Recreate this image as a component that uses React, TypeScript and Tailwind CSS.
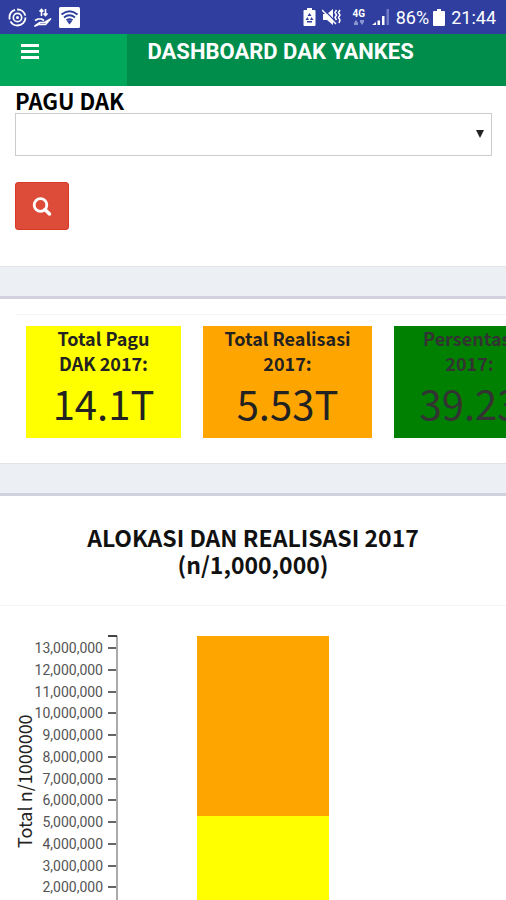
import React from "react";

const SANS = "font-['Noto_Sans_CJK_JP','Noto_Sans',sans-serif]";

function StatusBar() {
  return (
    <div className="flex h-[34px] shrink-0 items-center justify-between bg-[#303f9f] pr-2.5 pl-2 font-['Roboto',sans-serif] text-white">
      <div className="flex items-center gap-[7px]">
        <svg width="19" height="19" viewBox="0 0 19 19" fill="none" stroke="currentColor">
          <circle cx="9.5" cy="9.5" r="8" strokeWidth="1.8" strokeDasharray="21 2 12 2 11 2" />
          <circle cx="9.5" cy="9.5" r="4.2" strokeWidth="1.7" />
          <circle cx="9.5" cy="9.5" r="1.5" fill="currentColor" stroke="none" />
        </svg>
        <svg width="18" height="19" viewBox="0 0 18 19" fill="none" stroke="currentColor">
          <path d="M7.500 8V1.500M5.500 3.500l2-2 2 2M11.500 1v6.500M9.500 5.500l2 2 2-2" strokeWidth="1.600" />
          <path d="M1 12.500l3-1.500h3.500l2.500 1.500M6 14.500h4.500l6-3.500-5 5.500H4.500L1 18z" strokeWidth="1.700" strokeLinejoin="round" />
        </svg>
        <svg width="21" height="21" viewBox="0 0 21 21">
          <rect width="21" height="21" rx="1.500" fill="#fff" />
          <path d="M2.500 7.600Q10.500 1 18.500 7.600M5 10.500Q10.500 6 16 10.500M7.500 13.300Q10.500 11 13.500 13.300" fill="none" stroke="#303f9f" strokeWidth="1.900" />
          <path d="M8 14.200Q10.500 12.500 13 14.200L10.500 17.500z" fill="#303f9f" />
        </svg>
      </div>
      <div className="flex items-center text-[18px]">
        <svg width="13" height="18" viewBox="0 0 13 18" className="mr-1.5">
          <path d="M4 0h5v2h2.500q1 0 1 1v14q0 1-1 1h-10q-1 0-1-1V3q0-1 1-1H4z" fill="#fff" />
          <path d="M6.500 5l2 3h-4zM2.500 12l2-3 1.500 3zM10.500 12l-2-3-1.500 3zM4 13h5v1.500H4z" fill="#303f9f" />
        </svg>
        <svg width="20" height="18" viewBox="0 0 20 18" className="mr-2.5" fill="none" stroke="#fff">
          <path d="M1 6h4l6-5v16l-6-5H1z" fill="#fff" stroke="none" />
          <path d="M1 1l15 15" stroke="#303f9f" strokeWidth="1.200" />
          <path d="M0 2l14 14" strokeWidth="1.500" />
          <path d="M14.500 2l-1.500 2.500 1.500 2.500-1.500 2.500 1.500 2.500M18 2l-1.500 2.500L18 7l-1.500 2.500L18 12l-1 3" strokeWidth="1.500" />
        </svg>
        <div className="mr-1.5 flex w-[14px] flex-col items-center">
          <span className="text-[10px] leading-[10px] font-bold">4G</span>
          <svg width="10" height="5" viewBox="0 0 10 5" fill="#8c96d0" className="mt-px">
            <path d="M0 3l2-3 2 3v2H0zM6 0h4v2L8 5 6 2z" />
          </svg>
        </div>
        <svg width="18" height="18" viewBox="0 0 18 18" className="mr-1.5">
          <path d="M0 17l4-3v3zM5.500 12.500H8V17H5.500zM10 8h2.500v9H10z" fill="#fff" />
          <path d="M14.500 1H17v16h-2.500z" fill="#6f7bc4" />
        </svg>
        <span>86%</span>
        <svg width="12" height="17" viewBox="0 0 12 17" className="mr-1.5 ml-1">
          <path d="M4 0h4v2h3q1 0 1 1v13q0 1-1 1H1q-1 0-1-1V3q0-1 1-1h3z" fill="#fff" />
        </svg>
        <span>21:44</span>
      </div>
    </div>
  );
}

function Header() {
  return (
    <header className="flex h-[52px] shrink-0 bg-[#008d4c] text-white">
      <div className="w-1/4 bg-[#00a65a]">
        <button type="button" aria-label="Menu" className="ml-[21px] block pt-2.5">
          <svg width="18" height="16" viewBox="0 0 18 16" fill="currentColor">
            <path d="M0 0h18v3H0zM0 6h18v3H0zM0 12h18v3H0z" />
          </svg>
        </button>
      </div>
      <h1 className="ml-[21px] pt-1 font-['Roboto',sans-serif] text-[22px] leading-[27px] font-bold whitespace-nowrap">
        DASHBOARD DAK YANKES
      </h1>
    </header>
  );
}

function Filter() {
  return (
    <form className="shrink-0 pt-px pr-[14px] pb-9 pl-[15px]">
      <label htmlFor="pagu" className="block text-[22px] leading-[26px] font-bold text-black">
        PAGU DAK
      </label>
      <div className="relative">
        <select id="pagu" className="block h-[43px] w-full appearance-none border border-[#ccc] bg-white px-3 text-base">
          <option></option>
        </select>
        <svg width="8" height="8" viewBox="0 0 8 8" className="pointer-events-none absolute top-[17px] right-2" fill="#222">
          <path d="M0 0h8L4 8z" />
        </svg>
      </div>
      <button
        type="button"
        aria-label="Cari"
        className="mt-[26px] flex h-12 w-[54px] items-center justify-center rounded-[3px] border border-[#d73925] bg-[#dd4b39] text-white"
      >
        <svg width="20" height="20" viewBox="0 0 20 20" fill="none" stroke="currentColor" strokeWidth="2.800">
          <circle cx="8.500" cy="9" r="6.300" />
          <path d="M13 13.500l4.500 4.500" strokeWidth="3.400" strokeLinecap="round" />
        </svg>
      </button>
    </form>
  );
}

function Divider() {
  return <div className="h-[33px] shrink-0 border-t border-b-3 border-t-[#e0e4e7] border-b-[#d2d2de] bg-[#ecf0f5]" />;
}

const cards = [
  { lines: ["Total Pagu", "DAK 2017:"], value: "14.1T", box: "w-[155px] bg-[#ffff00] text-[#222]" },
  { lines: ["Total Realisasi", "2017:"], value: "5.53T", box: "w-[169px] bg-[#ffa500] text-[#222]" },
  { lines: ["Persentasi", "2017:"], value: "39.23", box: "w-[151px] bg-[#008000] text-[#333]" },
];

function Summary() {
  return (
    <section className="shrink-0 overflow-hidden pt-[15px] pb-[25px] pl-[15px]">
      <div className="flex gap-[22px] border-t border-[#f4f4f4] pt-[11px] pl-[11px]">
        {cards.map((c) => (
          <div key={c.value} className={`h-28 shrink-0 text-center ${c.box}`}>
            <h3 className="text-[18px] leading-[25px] font-bold">
              {c.lines[0]}
              <br />
              {c.lines[1]}
            </h3>
            <p className="text-[40px] leading-[54px]">{c.value}</p>
          </div>
        ))}
      </div>
    </section>
  );
}

const ticks = [13, 12, 11, 10, 9, 8, 7, 6, 5, 4, 3, 2];

function Chart() {
  return (
    <section className="min-h-0 flex-1 overflow-hidden">
      <h2 className="border-b border-[#f4f4f4] pt-7 pb-[27px] text-center text-[23px] leading-[27px] font-bold text-[#111]">
        ALOKASI DAN REALISASI 2017
        <br />
        (n/1,000,000)
      </h2>
      <svg width="506" height="340" viewBox="0 0 506 340" className="block">
        <rect x="197" y="30" width="132" height="180" fill="#ffa500" />
        <rect x="197" y="210" width="132" height="114" fill="#ffff00" />
        <path d="M117 30V324" stroke="#aaa" strokeWidth="2" />
        <path d="M108 30H117" stroke="#444" strokeWidth="2" />
        {ticks.map((t, i) => {
          const y = Math.round(42 + i * 21.75);
          return (
            <g key={t}>
              <path d={`M108 ${y}H116`} stroke="#666" strokeWidth="2" />
              <text x="103" y={y + 5} textAnchor="end" fill="#555" className="font-['Roboto',sans-serif] text-[14px]">
                {`${t},000,000`}
              </text>
            </g>
          );
        })}
        <text transform="translate(32 242) rotate(-90)" fill="#222" className="text-[18px]">
          Total n/1000000
        </text>
      </svg>
    </section>
  );
}

export default function App() {
  return (
    <div className={`flex h-screen flex-col overflow-hidden bg-white ${SANS}`}>
      <StatusBar />
      <Header />
      <Filter />
      <Divider />
      <Summary />
      <Divider />
      <Chart />
    </div>
  );
}
